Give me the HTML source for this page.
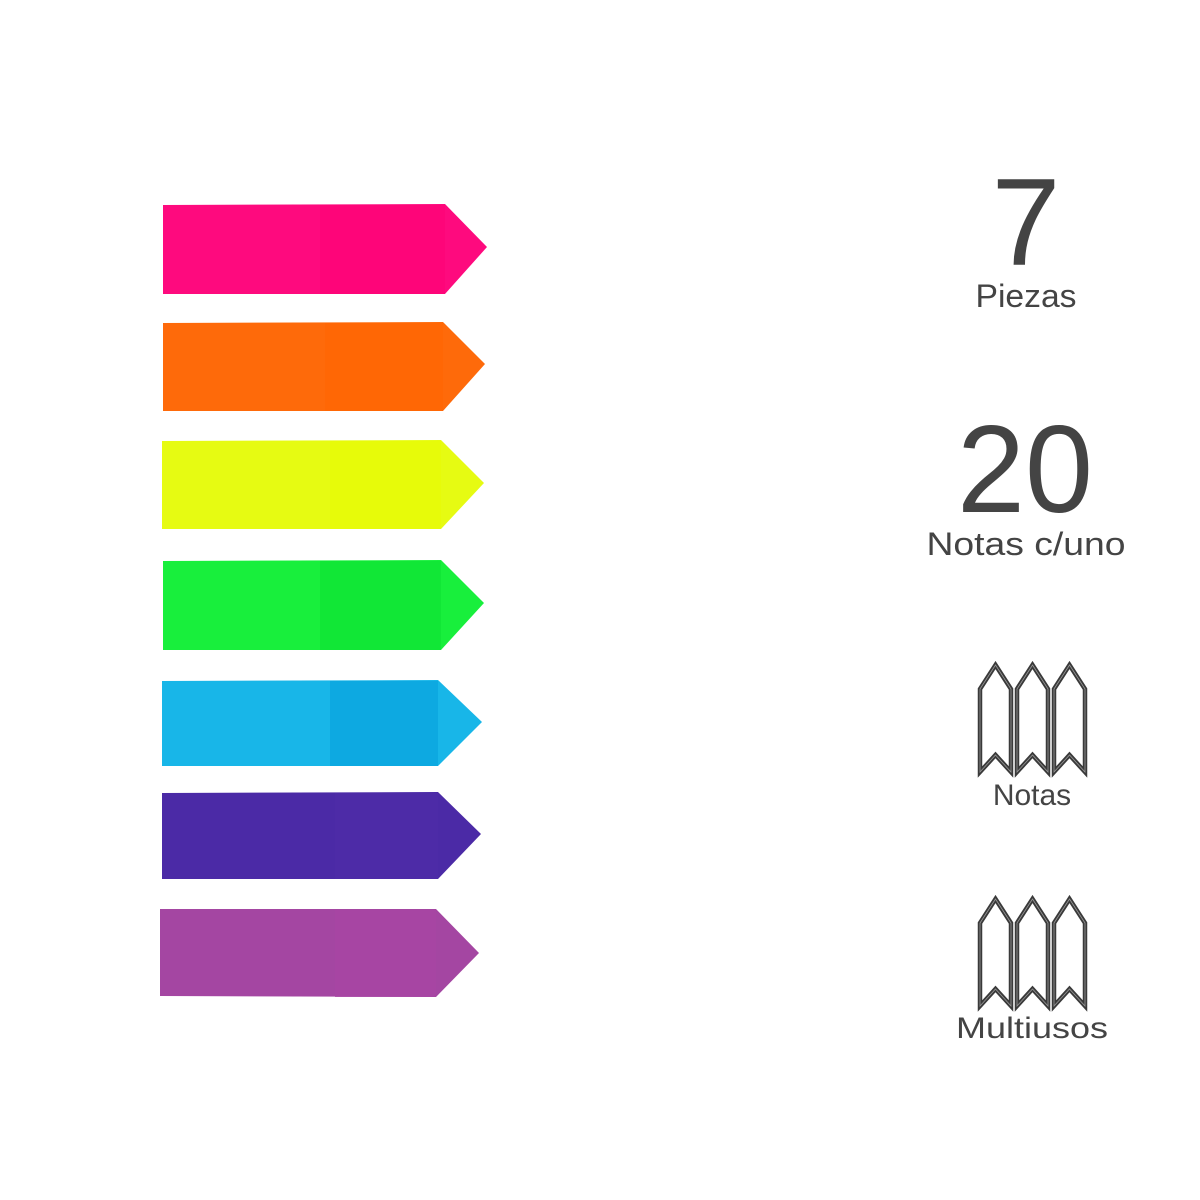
<!DOCTYPE html>
<html><head><meta charset="utf-8"><style>
html,body{margin:0;padding:0;background:#fff;}
svg{display:block;}
text{font-family:"Liberation Sans",sans-serif;fill:#444;}
</style></head><body>
<svg width="1200" height="1200" viewBox="0 0 1200 1200" xmlns="http://www.w3.org/2000/svg">
<defs>
<path id="tab" d="M15.5 0 L31 24 L31 107 L15.5 90 L0 107 L0 24 Z"/>
<g id="icon">
<use href="#tab" x="0" fill="none" stroke="#3a3a3a" stroke-width="4.5"/>
<use href="#tab" x="37" fill="none" stroke="#3a3a3a" stroke-width="4.5"/>
<use href="#tab" x="74" fill="none" stroke="#3a3a3a" stroke-width="4.5"/>
<use href="#tab" x="0" fill="none" stroke="#999" stroke-width="0.8"/>
<use href="#tab" x="37" fill="none" stroke="#999" stroke-width="0.8"/>
<use href="#tab" x="74" fill="none" stroke="#999" stroke-width="0.8"/>
</g>
</defs>
<rect width="1200" height="1200" fill="#fff"/>
<polygon points="163,205 445,204 487,247 445,294 163,294" fill="#fe0a7e"/>
<rect x="320" y="205" width="125" height="89" fill="#fd0074" opacity="0.5"/>
<polygon points="163,323 443,322 485,364 443,411 163,411" fill="#fe6a0a"/>
<rect x="325" y="323" width="118" height="88" fill="#ff6400" opacity="0.5"/>
<polygon points="162,441 441,440 484,483 441,529 162,529" fill="#e6fb12"/>
<rect x="330" y="441" width="111" height="88" fill="#e8fb00" opacity="0.5"/>
<polygon points="163,561 441,560 484,603 441,650 163,650" fill="#18ef3c"/>
<rect x="320" y="561" width="121" height="89" fill="#0ae030" opacity="0.5"/>
<polygon points="162,681 438,680 482,722 438,766 162,766" fill="#18b6e8"/>
<rect x="330" y="681" width="108" height="85" fill="#06a0dc" opacity="0.6"/>
<polygon points="162,793 438,792 481,834 438,879 162,879" fill="#4b2aa6"/>
<rect x="335" y="793" width="103" height="86" fill="#4e2ca8" opacity="0.8"/>
<polygon points="160,909 436,909 479,953 436,997 160,996" fill="#a446a2"/>
<rect x="335" y="910" width="101" height="87" fill="#a845a4" opacity="0.8"/>
<text x="1026" y="265" font-size="124" text-anchor="middle">7</text>
<text x="1026" y="307" font-size="32" text-anchor="middle" textLength="101" lengthAdjust="spacingAndGlyphs">Piezas</text>
<text x="1025" y="512" font-size="124" text-anchor="middle" textLength="136" lengthAdjust="spacingAndGlyphs">20</text>
<text x="1026" y="555" font-size="32" text-anchor="middle" textLength="199" lengthAdjust="spacingAndGlyphs">Notas c/uno</text>
<use href="#icon" x="980" y="665"/>
<text x="1032" y="805" font-size="30" text-anchor="middle">Notas</text>
<use href="#icon" x="980" y="899"/>
<text x="1032" y="1038" font-size="30" text-anchor="middle" textLength="152" lengthAdjust="spacingAndGlyphs">Multiusos</text>
</svg>
</body></html>
